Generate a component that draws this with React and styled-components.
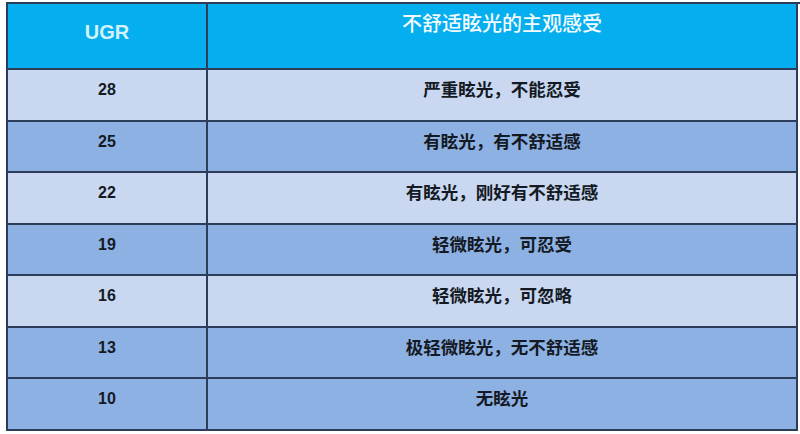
import React from "react";
import styled, { createGlobalStyle } from "styled-components";

const GlobalStyle = createGlobalStyle`
  html, body {
    margin: 0;
    padding: 0;
    background: #ffffff;
  }
  body {
    font-family: "Liberation Sans", "Noto Sans CJK SC", sans-serif;
  }
`;

const rows = [
  { ugr: "28", feel: "严重眩光，不能忍受", shade: "light" },
  { ugr: "25", feel: "有眩光，有不舒适感", shade: "dark" },
  { ugr: "22", feel: "有眩光，刚好有不舒适感", shade: "light" },
  { ugr: "19", feel: "轻微眩光，可忍受", shade: "dark" },
  { ugr: "16", feel: "轻微眩光，可忽略", shade: "light" },
  { ugr: "13", feel: "极轻微眩光，无不舒适感", shade: "dark" },
  { ugr: "10", feel: "无眩光", shade: "dark" },
];

const Page = styled.div`
  padding: 2px 0 0 6px;
`;

const Table = styled.div`
  display: grid;
  grid-template-columns: 200px 590px;
  width: 792px;
  border-top: 2px solid #2b3d5a;
  border-left: 2px solid #2b3d5a;
`;

const HeadCell = styled.div`
  height: 64px;
  box-sizing: content-box;
  padding-top: ${(p) => p.$offset}px;
  height: ${(p) => 64 - p.$offset}px;
  background: #04aeef;
  border-right: 2px solid #2b3d5a;
  border-bottom: 2px solid #2b3d5a;
  text-align: center;
  line-height: 24px;
  font-size: ${(p) => (p.$latin ? "20px" : "20px")};
  font-weight: ${(p) => (p.$latin ? 700 : 500)};
  color: ${(p) => (p.$latin ? "#d3f3f9" : "#f3fbff")};
`;

const Cell = styled.div`
  box-sizing: border-box;
  height: 51.5px;
  padding-top: 8px;
  background: ${(p) => (p.$shade === "dark" ? "#8eb1e4" : "#c9d8f0")};
  border-right: 2px solid #2b3d5a;
  border-bottom: 2px solid #2b3d5a;
  text-align: center;
  line-height: 24px;
  font-size: ${(p) => (p.$num ? "16px" : "17.5px")};
  font-weight: 700;
  color: #141a24;
`;

export default function App() {
  return (
    <>
      <GlobalStyle />
      <Page>
        <Table>
          <HeadCell $latin $offset={16}>UGR</HeadCell>
          <HeadCell $offset={8}>不舒适眩光的主观感受</HeadCell>
          {rows.map((r) => (
            <React.Fragment key={r.ugr}>
              <Cell $num $shade={r.shade}>{r.ugr}</Cell>
              <Cell $shade={r.shade}>{r.feel}</Cell>
            </React.Fragment>
          ))}
        </Table>
      </Page>
    </>
  );
}
